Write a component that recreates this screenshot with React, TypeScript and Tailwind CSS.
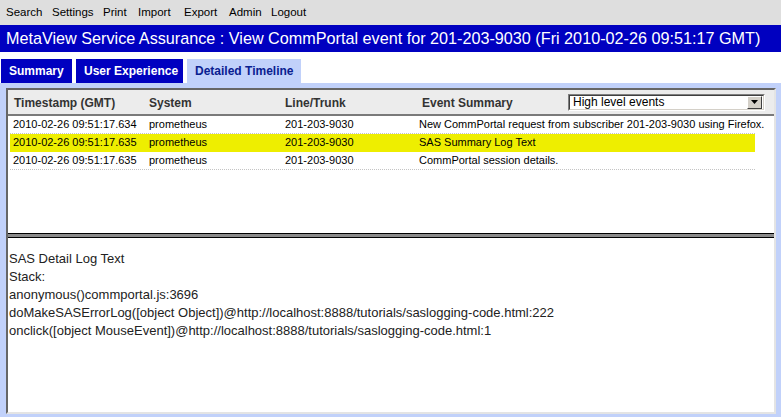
import React from 'react';

const menuItems = [
    { label: 'Search', w: 'w-[46px]' },
    { label: 'Settings', w: 'w-[51px]' },
    { label: 'Print', w: 'w-[35px]' },
    { label: 'Import', w: 'w-[46px]' },
    { label: 'Export', w: 'w-[45px]' },
    { label: 'Admin', w: 'w-[42px]' },
    { label: 'Logout', w: 'w-[50px]' },
];

const events = [
    {
        time: '2010-02-26 09:51:17.634',
        system: 'prometheus',
        line: '201-203-9030',
        summary: 'New CommPortal request from subscriber 201-203-9030 using Firefox.',
        selected: false,
    },
    {
        time: '2010-02-26 09:51:17.635',
        system: 'prometheus',
        line: '201-203-9030',
        summary: 'SAS Summary Log Text',
        selected: true,
    },
    {
        time: '2010-02-26 09:51:17.635',
        system: 'prometheus',
        line: '201-203-9030',
        summary: 'CommPortal session details.',
        selected: false,
    },
];

const detailLines = [
    'SAS Detail Log Text',
    'Stack:',
    'anonymous()commportal.js:3696',
    'doMakeSASErrorLog([object Object])@http://localhost:8888/tutorials/saslogging-code.html:222',
    'onclick([object MouseEvent])@http://localhost:8888/tutorials/saslogging-code.html:1',
];

export default function App() {
    return (
        <div className="w-[781px] h-[417px] overflow-hidden bg-white font-['Liberation_Sans',Arial,sans-serif] text-black">
            {/* Menu */}
            <div className="h-[25px] bg-[#dedede] flex items-center pl-[6px] text-[11.5px]">
                {menuItems.map((m) => (
                    <span key={m.label} className={`${m.w} flex-none`}>
                        {m.label}
                    </span>
                ))}
            </div>

            {/* Title */}
            <div className="h-[27px] bg-[#0000c0] text-white text-[16.2px] leading-[27px] pl-[6px] whitespace-nowrap overflow-hidden">
                MetaView Service Assurance : View CommPortal event for 201-203-9030 (Fri 2010-02-26 09:51:17 GMT)
            </div>

            <div className="h-[7px]" />

            {/* Tabs */}
            <div className="h-[24px] flex gap-[4px] pl-[1px] text-[12px] font-bold leading-[24px]">
                <div className="w-[71px] bg-[#0000c0] text-white pl-[8px]">Summary</div>
                <div className="w-[107px] bg-[#0000c0] text-white pl-[8px]">User Experience</div>
                <div className="w-[114px] bg-[#c1d1fa] text-[#0a2090] pl-[8px]">Detailed Timeline</div>
            </div>

            {/* Content */}
            <div className="h-[334px] bg-[#c1d1fa] pl-[6px] pt-[5px] pr-[5px] pb-[3px] flex">
                <div className="flex-1 flex flex-col bg-white border-2 border-t-[#666666] border-l-[#666666] border-r-[#e4e4e4] border-b-[#e4e4e4]">
                    {/* Timeline table */}
                    <div className="h-[143px] flex-none flex flex-col">
                        <div className="h-[26px] flex-none bg-[#ececec] border-b-2 border-[#7a7a7a] flex items-center pl-[6px] pt-[2px] text-[12px] font-bold text-[#333333]">
                            <span className="w-[135px] flex-none">Timestamp (GMT)</span>
                            <span className="w-[136px] flex-none">System</span>
                            <span className="w-[137px] flex-none">Line/Trunk</span>
                            <span className="flex-none">Event Summary</span>
                            <div className="ml-auto mr-[9px] mb-[2px] w-[197px] h-[17px] flex-none border border-[#7f7f7f] border-b-white border-r-white bg-white flex items-center">
                                <div className="flex-1 h-full border border-[#404040] border-b-[#d4d0c8] border-r-[#d4d0c8] flex items-center">
                                    <span className="flex-1 pl-[3px] text-[12px] font-normal text-black leading-none">
                                        High level events
                                    </span>
                                    <div className="w-[15px] h-[13px] mr-[1px] bg-[#d4d0c8] border border-white border-b-[#404040] border-r-[#404040] flex items-center justify-center">
                                        <svg width="7" height="4" viewBox="0 0 7 4">
                                            <path d="M0 0h7L3.5 4z" fill="#000" />
                                        </svg>
                                    </div>
                                </div>
                            </div>
                        </div>
                        <div className="flex-1 pl-[2px] text-[11px]">
                            {events.map((ev, i) => (
                                <div
                                    key={i}
                                    className={`w-[745px] h-[18px] flex items-center pl-[3px] border-b border-dotted ${
                                        ev.selected ? 'bg-[#eeee00] border-[#eeee00]' : 'border-[#c4c4c4]'
                                    }`}
                                >
                                    <span className="w-[136px] flex-none">{ev.time}</span>
                                    <span className="w-[136px] flex-none">{ev.system}</span>
                                    <span className="w-[134px] flex-none">{ev.line}</span>
                                    <span className="whitespace-nowrap">{ev.summary}</span>
                                </div>
                            ))}
                        </div>
                    </div>

                    {/* Splitter */}
                    <div className="h-[5px] flex-none bg-[#8a8a8a] border-y border-black" />

                    {/* Detail */}
                    <div className="flex-1 pt-[12px] pl-[1px] text-[13px] leading-[18px] text-[#222222]">
                        {detailLines.map((l, i) => (
                            <div key={i} className="whitespace-nowrap">
                                {l}
                            </div>
                        ))}
                    </div>
                </div>
            </div>
        </div>
    );
}
